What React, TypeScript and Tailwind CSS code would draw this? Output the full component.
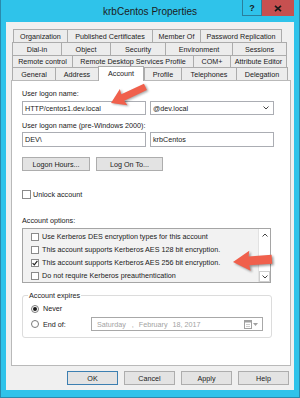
import React from 'react';

type TabDef = [string, string];

const upperRows: { cls: string; tabs: TabDef[] }[] = [
  {
    cls: 'ml-[7px] h-[13px]',
    tabs: [
      ['Organization', 'w-[54px]'],
      ['Published Certificates', 'w-[85px]'],
      ['Member Of', 'w-[48px]'],
      ['Password Replication', 'w-[82px]'],
    ],
  },
  {
    cls: 'ml-[6px] h-[13px]',
    tabs: [
      ['Dial-in', 'w-[49px]'],
      ['Object', 'w-[49px]'],
      ['Security', 'w-[55px]'],
      ['Environment', 'w-[67px]'],
      ['Sessions', 'w-[55px]'],
    ],
  },
  {
    cls: 'ml-[6px] h-[12px]',
    tabs: [
      ['Remote control', 'w-[60px]'],
      ['Remote Desktop Services Profile', 'w-[121px]'],
      ['COM+', 'w-[37px]'],
      ['Attribute Editor', 'w-[57px]'],
    ],
  },
];

const bottomRow: TabDef[] = [
  ['General', 'w-[43px]'],
  ['Address', 'w-[43px]'],
  ['Account', 'w-[46px]'],
  ['Profile', 'w-[37px]'],
  ['Telephones', 'w-[55px]'],
  ['Delegation', 'w-[52px]'],
];

const options = [
  { label: 'Use Kerberos DES encryption types for this account', checked: false },
  { label: 'This account supports Kerberos AES 128 bit encryption.', checked: false },
  { label: 'This account supports Kerberos AES 256 bit encryption.', checked: true },
  { label: 'Do not require Kerberos preauthentication', checked: false },
];

function CheckBox({ checked = false, size = 'w-[8px] h-[8px]' }: { checked?: boolean; size?: string }) {
  return (
    <span className={`${size} shrink-0 border border-[#8a8a8a] bg-white flex items-center justify-center`}>
      {checked && (
        <svg width="6" height="6" viewBox="0 0 6 6">
          <path d="M0.6 3.2 L2.3 4.9 L5.4 0.9" stroke="#222" strokeWidth="1.2" fill="none" />
        </svg>
      )}
    </span>
  );
}

function Radio({ checked = false }: { checked?: boolean }) {
  return (
    <span className="w-[8px] h-[8px] shrink-0 rounded-full border border-[#7a7a7a] bg-white flex items-center justify-center">
      {checked && <span className="w-[4px] h-[4px] rounded-full bg-[#1a1a1a]" />}
    </span>
  );
}

function Chevron({ up = false }: { up?: boolean }) {
  return (
    <svg width="6" height="4" viewBox="0 0 6 4">
      <polyline
        points={up ? '0.5,3.5 3,1 5.5,3.5' : '0.5,0.5 3,3 5.5,0.5'}
        stroke="#444"
        strokeWidth="1"
        fill="none"
      />
    </svg>
  );
}

function Btn({ label, cls = 'border-[#adadad]', w }: { label: string; cls?: string; w: string }) {
  return (
    <div className={`${w} h-[14px] border ${cls} bg-[#e3e3e3] flex items-center justify-center`}>{label}</div>
  );
}

export default function App() {
  return (
    <div className="relative w-[300px] h-[398px] bg-[#2fc3ea] border-x border-b border-[#2a8aac] font-['Liberation_Sans',Arial,sans-serif] text-[7.2px] leading-[9px] text-[#1a1a1a] overflow-hidden">
      {/* title bar */}
      <div className="h-[22px] grid grid-cols-[1fr_auto_1fr]">
        <div />
        <div className="self-center pt-[1px] text-[10px] leading-[12px] text-[#1c1c1c]">krbCentos Properties</div>
        <div className="flex justify-end pr-[5px]">
          <div className="w-[20px] h-[16px] border border-t-0 border-[#2a7f9c] flex items-center justify-center text-[9px] font-bold leading-[10px]">
            ?
          </div>
          <div className="w-[32px] h-[16px] bg-[#c75050] flex items-center justify-center">
            <svg width="8" height="7" viewBox="0 0 8 7">
              <path d="M1 0.8 L7 6.2 M7 0.8 L1 6.2" stroke="#1a1a1a" strokeWidth="1.7" />
            </svg>
          </div>
        </div>
      </div>

      {/* client area */}
      <div className="mx-[5px] h-[368px] bg-[#f0f0f0] flex flex-col pt-[7px]">
        {upperRows.map((row, i) => (
          <div key={i} className={`flex ${row.cls}`}>
            {row.tabs.map(([label, w], j) => (
              <div
                key={label}
                className={`${w} h-full flex items-center justify-center whitespace-nowrap overflow-hidden border-t border-l border-[#acacac] bg-[#ececec] ${j === row.tabs.length - 1 ? 'border-r' : ''}`}
              >
                {label}
              </div>
            ))}
          </div>
        ))}
        <div className="flex items-end ml-[6px] h-[13px]">
          {bottomRow.map(([label, w], j) => {
            const active = label === 'Account';
            return (
              <div
                key={label}
                className={`${w} flex items-center justify-center whitespace-nowrap border-t border-l border-[#acacac] ${
                  active ? 'relative z-10 h-[15px] -mb-px bg-white border-r pb-[2px]' : 'h-[13px] bg-[#ececec]'
                } ${j === bottomRow.length - 1 ? 'border-r' : ''}`}
              >
                {label}
              </div>
            );
          })}
        </div>

        {/* tab page */}
        <div className="ml-[5px] w-[280px] h-[286px] bg-white border border-[#b9b9b9] flex flex-col px-[10px]">
          <div className="mt-[8px]">User logon name:</div>
          <div className="mt-[3px] flex gap-[4px]">
            <div className="w-[124px] h-[14px] border border-[#abadb3] flex items-center pl-[2px]">HTTP/centos1.dev.local</div>
            <div className="w-[124px] h-[14px] border border-[#abadb3] flex items-center pl-[2px] pr-[4px] justify-between">
              <span>@dev.local</span>
              <Chevron />
            </div>
          </div>

          <div className="mt-[6px]">User logon name (pre-Windows 2000):</div>
          <div className="mt-[2px] flex gap-[4px]">
            <div className="w-[124px] h-[15px] border border-[#abadb3] flex items-center pl-[2px]">DEV\</div>
            <div className="w-[124px] h-[15px] border border-[#abadb3] flex items-center pl-[2px]">krbCentos</div>
          </div>

          <div className="mt-[10px] flex gap-[6px]">
            <Btn label="Logon Hours..." w="w-[68px]" />
            <Btn label="Log On To..." w="w-[67px]" />
          </div>

          <div className="mt-[19px] flex items-center gap-[2px]">
            <CheckBox size="w-[9px] h-[9px]" />
            <span>Unlock account</span>
          </div>

          <div className="mt-[17px]">Account options:</div>
          <div className="mt-[3px] w-[249px] h-[55px] border border-[#a5a5a5] bg-[#f2f2f2] flex">
            <div className="flex-1 pt-[1px] pl-[8px]">
              {options.map((o) => (
                <div key={o.label} className="h-[13px] flex items-center gap-[3px] whitespace-nowrap">
                  <CheckBox checked={o.checked} />
                  <span>{o.label}</span>
                </div>
              ))}
            </div>
            <div className="w-[12px] bg-white border-l border-[#e2e2e2] flex flex-col justify-between">
              <div className="h-[11px] flex items-center justify-center">
                <Chevron up />
              </div>
              <div className="h-[11px] border border-[#cfcfcf] flex items-center justify-center">
                <Chevron />
              </div>
            </div>
          </div>

          <fieldset className="mt-[8px] w-[250px] border border-[#dcdcdc] rounded-[3px] pt-[2px] pb-[6px] pl-[8px]">
            <legend className="-ml-[3px] px-[1px]">Account expires</legend>
            <div className="h-[13px] flex items-center gap-[4px]">
              <Radio checked />
              <span>Never</span>
            </div>
            <div className="mt-[2px] h-[14px] flex items-center">
              <div className="w-[60px] flex items-center gap-[4px]">
                <Radio />
                <span>End of:</span>
              </div>
              <div className="w-[172px] h-[14px] border border-[#a8a8a8] bg-white flex items-center pl-[5px] text-[#a3a3a3]">
                <span>Saturday</span>
                <span className="ml-[6px]">,</span>
                <span className="ml-[5px]">February</span>
                <span className="ml-[5px]">18, 2017</span>
                <div className="ml-auto mr-[4px] flex items-center gap-[1px]">
                  <svg width="8" height="9" viewBox="0 0 8 9">
                    <rect x="0.5" y="0.5" width="7" height="8" fill="#fff" stroke="#a0a0a0" />
                    <rect x="0.5" y="0.5" width="7" height="2" fill="#a0a0a0" />
                    <path d="M2 4.5 H6 M2 6.5 H6" stroke="#c0c0c0" strokeWidth="0.8" />
                  </svg>
                  <svg width="5" height="3" viewBox="0 0 5 3">
                    <path d="M0 0 H5 L2.5 3 Z" fill="#a0a0a0" />
                  </svg>
                </div>
              </div>
            </div>
          </fieldset>
        </div>

        <div className="mt-[5px] flex justify-end gap-[6px] pr-[5px]">
          <Btn label="OK" w="w-[51px]" cls="border-[#3c7fb1]" />
          <Btn label="Cancel" w="w-[51px]" />
          <Btn label="Apply" w="w-[51px]" />
          <Btn label="Help" w="w-[51px]" />
        </div>
      </div>

      {/* annotation arrows */}
      <svg className="absolute inset-0 pointer-events-none" width="300" height="398" viewBox="0 0 300 398">
        <defs>
          <filter id="sh" x="-20%" y="-20%" width="140%" height="140%">
            <feGaussianBlur stdDeviation="1" />
          </filter>
        </defs>
        <g transform="translate(110 103) rotate(-25)">
          <polygon
            points="0,0 14,-9 13,-3.5 38,-3.5 38,3.5 13,3.5 14,9"
            fill="#000"
            opacity="0.35"
            filter="url(#sh)"
            transform="translate(1 1.5)"
          />
          <polygon points="0,0 14,-9 13,-3.5 38,-3.5 38,3.5 13,3.5 14,9" fill="#f0604c" />
        </g>
        <g transform="translate(232 262) rotate(-4)">
          <polygon
            points="0,0 17,-10 16,-4.5 39,-4.5 39,4.5 16,4.5 17,10"
            fill="#000"
            opacity="0.4"
            filter="url(#sh)"
            transform="translate(1.5 1.5)"
          />
          <polygon points="0,0 17,-10 16,-4.5 39,-4.5 39,4.5 16,4.5 17,10" fill="#f0604c" />
        </g>
      </svg>
    </div>
  );
}
